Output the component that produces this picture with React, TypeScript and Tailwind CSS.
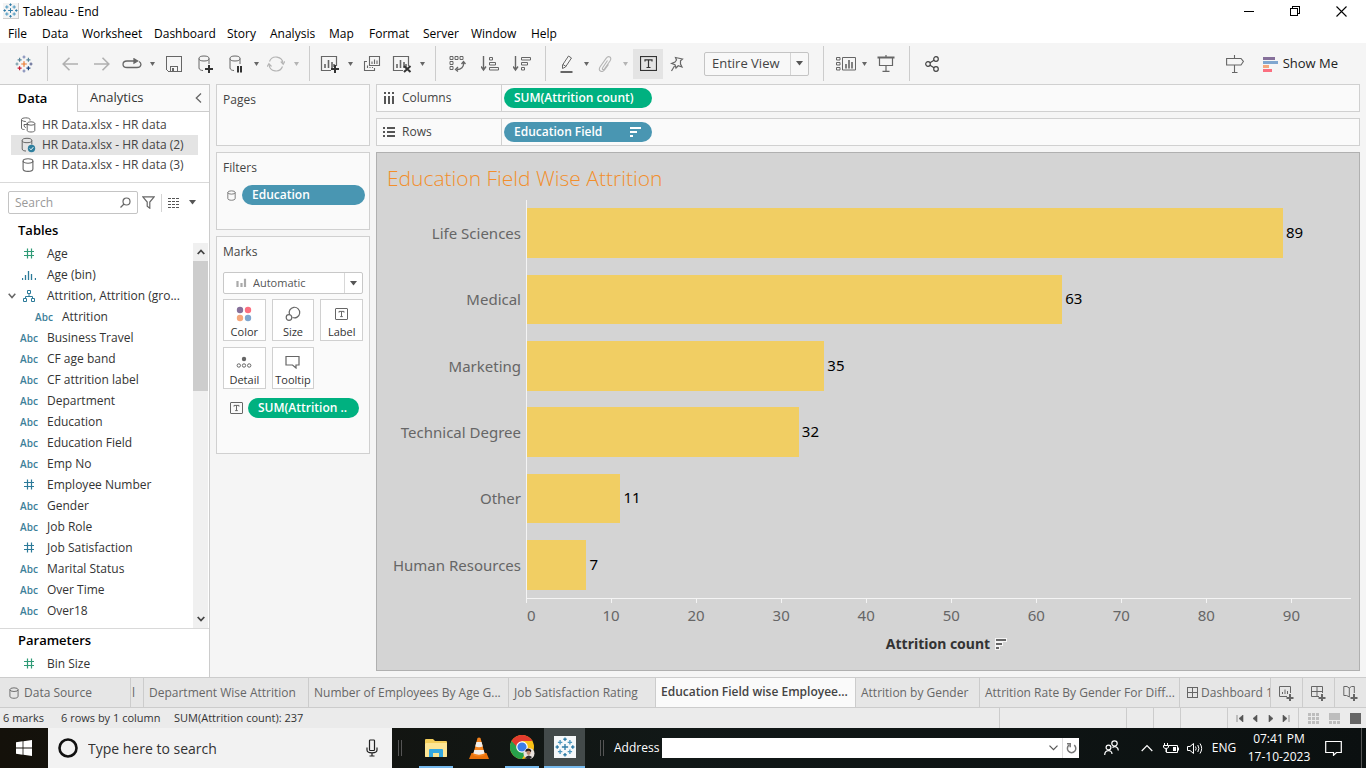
import React from "react";

const UI = "font-['Open_Sans','Noto_Sans',sans-serif]";

/* ---------- small drawings ---------- */

type IconProps = { w: number; h: number; children: React.ReactNode; color?: string; sw?: number; crisp?: boolean; className?: string };

function Icon({ w, h, children, color = "#666", sw = 1, crisp = false, className = "" }: IconProps) {
  return (
    <svg
      width={w}
      height={h}
      viewBox={`0 0 ${w} ${h}`}
      fill="none"
      stroke={color}
      strokeWidth={sw}
      shapeRendering={crisp ? "crispEdges" : "auto"}
      className={`shrink-0 ${className}`}
      aria-hidden="true"
    >
      {children}
    </svg>
  );
}

function TableauLogo({ size, mono = false }: { size: number; mono?: boolean }) {
  const c = mono
    ? ["#2e7ba6", "#4b97bf", "#4b97bf", "#4b97bf", "#4b97bf", "#2e7ba6", "#2e7ba6", "#2e7ba6", "#2e7ba6"]
    : ["#eb7a2f", "#5b879b", "#5b879b", "#c72035", "#1f457e", "#7b86b5", "#7199a6", "#5b6591", "#7b86b5"];
  const p = (x: number, y: number, r: number) => `M${x - r} ${y}H${x + r}M${x} ${y - r}V${y + r}`;
  return (
    <svg width={size} height={size} viewBox="0 0 18 18" fill="none" strokeWidth="1.2" className="shrink-0" aria-hidden="true">
      <path d={p(9, 9, 2.8)} stroke={c[0]} />
      <path d={p(4.6, 4.8, 2)} stroke={c[1]} />
      <path d={p(13.4, 4.8, 2)} stroke={c[2]} />
      <path d={p(4.6, 13.2, 2)} stroke={c[3]} />
      <path d={p(13.4, 13.2, 2)} stroke={c[4]} />
      <path d={p(9, 2, 1.5)} stroke={c[5]} />
      <path d={p(2, 9, 1.5)} stroke={c[6]} />
      <path d={p(16, 9, 1.5)} stroke={c[7]} />
      <path d={p(9, 16, 1.5)} stroke={c[8]} />
    </svg>
  );
}

const Caret = ({ color = "#666" }: { color?: string }) => (
  <svg width="5" height="4" viewBox="0 0 5 4" fill={color} className="shrink-0" aria-hidden="true">
    <path d="M0 0H5L2.5 4Z" />
  </svg>
);

const BigCaret = ({ className = "" }: { className?: string }) => (
  <svg width="7" height="5" viewBox="0 0 7 5" fill="#555" className={`shrink-0 ${className}`} aria-hidden="true">
    <path d="M0 0H7L3.5 4.5Z" />
  </svg>
);

const Cylinder = ({ w = 12, h = 14, color = "#666" }: { w?: number; h?: number; color?: string }) => (
  <svg width={w} height={h} viewBox="0 0 12 14" fill="none" stroke={color} strokeWidth="1.1" className="shrink-0" aria-hidden="true">
    <ellipse cx="6" cy="3" rx="4.9" ry="2.2" />
    <path d="M1.1 3V11C1.1 14.1 10.9 14.1 10.9 11V3" />
  </svg>
);

const TextMark = ({ w = 13, h = 12, color = "#666" }: { w?: number; h?: number; color?: string }) => (
  <svg width={w} height={h} viewBox="0 0 13 12" fill="none" stroke={color} className="shrink-0" aria-hidden="true">
    <rect x="0.5" y="0.5" width="12" height="11" rx="0.5" />
    <path d="M4 4.6V3.4H9V4.6M6.5 3.4V8.6M5.2 8.6H7.8" />
  </svg>
);

const Barred = () => (
  <>
    <path d="M11 15.5H1.5V1.5H16.5V11" />
    <path d="M5 13V9M8.5 13V5M12 13V7M14 12V9" strokeWidth="1.6" />
  </>
);

const PlusMark = ({ x, y }: { x: number; y: number }) => <path d={`M${x - 4} ${y}H${x + 4}M${x} ${y - 4}V${y + 4}`} stroke="#333" strokeWidth="2" />;

/* ---------- title and menu bars ---------- */

function TitleBar() {
  return (
    <header className="flex h-[22px] shrink-0 items-center bg-white pr-0.5 pl-[3px]">
      <span className="flex border-r border-b border-[#ccc] bg-[#f4f4f4]">
        <TableauLogo size={15} mono />
      </span>
      <h1 className="ml-1 flex-1 pt-0.5 text-[12px] leading-4 text-black">Tableau - End</h1>
      <button aria-label="Minimize" className="flex h-full w-[46px] items-center justify-center">
        <Icon w={10} h={10} color="#000" crisp><path d="M0 5.5H10" /></Icon>
      </button>
      <button aria-label="Restore" className="flex h-full w-[46px] items-center justify-center">
        <Icon w={10} h={10} color="#000" crisp><path d="M.5 2.5H7.5V9.5H.5ZM2.5 2.5V.5H9.5V7.5H7.5" /></Icon>
      </button>
      <button aria-label="Close" className="flex h-full w-[46px] items-center justify-center">
        <Icon w={11} h={11} color="#000" sw={1.1}><path d="M.5.5L10.5 10.5M10.5.5L.5 10.5" /></Icon>
      </button>
    </header>
  );
}

const MENUS = [
  ["File", "w-[34px]"], ["Data", "w-10"], ["Worksheet", "w-[72px]"], ["Dashboard", "w-[73px]"], ["Story", "w-[43px]"],
  ["Analysis", "w-[59px]"], ["Map", "w-10"], ["Format", "w-[54px]"], ["Server", "w-12"], ["Window", "w-[60px]"], ["Help", "w-10"],
];

function MenuBar() {
  return (
    <nav className="flex h-[21px] shrink-0 bg-white pt-0.5 pl-2 text-[12px] text-black">
      {MENUS.map(([name, w]) => (
        <button key={name} className={`${w} text-left whitespace-nowrap`}>{name}</button>
      ))}
    </nav>
  );
}

/* ---------- toolbar ---------- */

function Tool({ label, className, children }: { label: string; className: string; children: React.ReactNode }) {
  return (
    <button aria-label={label} className={`flex h-full shrink-0 items-center justify-center ${className}`}>{children}</button>
  );
}

const Sep = ({ className = "" }: { className?: string }) => <span className={`h-[35px] w-px shrink-0 bg-[#ccc] ${className}`} />;

function Toolbar() {
  return (
    <div role="toolbar" aria-label="Main toolbar" className="flex h-[41px] shrink-0 items-center bg-[#f5f5f5]">
      <Tool label="Start page" className="w-[47px]"><TableauLogo size={18} /></Tool>
      <Sep />
      <Tool label="Undo" className="ml-1.5 w-8"><Icon w={16} h={14} color="#b0b0b0" sw={1.6}><path d="M16 7H1M7.5.7L1.2 7L7.5 13.3" /></Icon></Tool>
      <Tool label="Redo" className="w-8"><Icon w={16} h={14} color="#b0b0b0" sw={1.6}><path d="M0 7H15M8.5.7L14.8 7L8.5 13.3" /></Icon></Tool>
      <Tool label="Replay" className="w-7">
        <Icon w={20} h={12} sw={1.3}><path d="M14 3H5C-.3 3-.3 9.5 5 9.5H15C19.5 9.5 20 5 17 3.5" /><path d="M12 .8L15.6 3L12 5.2Z" fill="#666" /></Icon>
      </Tool>
      <Tool label="Replay options" className="w-3"><Caret /></Tool>
      <Tool label="Save" className="w-8">
        <Icon w={16} h={16} crisp><path d="M.5.5H15.5V15.5H2.5L.5 13.5ZM4.5 15V10.5H11.5V15" /><path d="M6 12H8V15H6Z" fill="#666" stroke="none" /></Icon>
      </Tool>
      <Tool label="New data source" className="w-[31px]">
        <Icon w={16} h={18}><ellipse cx="6" cy="3.5" rx="5" ry="2.5" /><path d="M1 3.5V13C1 14.5 3 15.5 5 15.5M11 3.5V9" /><PlusMark x={11} y={14} /></Icon>
      </Tool>
      <Tool label="Pause updates" className="w-[29px]">
        <Icon w={14} h={18}><ellipse cx="6" cy="3.5" rx="5" ry="2.5" /><path d="M1 3.5V13C1 14.5 3 15.5 5 15.5M11 3.5V9" /><path d="M9 11V17.5M12 11V17.5" stroke="#333" strokeWidth="2" /></Icon>
      </Tool>
      <Tool label="Pause options" className="w-3"><Caret /></Tool>
      <Tool label="Refresh" className="w-7">
        <Icon w={18} h={16} color="#b4b4b4" sw={1.2}><path d="M2.5 5.5A7 7 0 0 1 16 7.5M15.5 10.5A7 7 0 0 1 2 8.5" /><path d="M13.8 5.5L16.2 8.2L18 5.2M0 10.8L1.9 7.8L4.5 10.5" /></Icon>
      </Tool>
      <Tool label="Refresh options" className="w-[13px]"><Caret color="#b4b4b4" /></Tool>
      <Sep className="ml-1.5" />
      <Tool label="New worksheet" className="ml-1.5 w-7"><Icon w={20} h={18} sw={1.2}><Barred /><PlusMark x={15} y={14} /></Icon></Tool>
      <Tool label="New worksheet options" className="w-3"><Caret /></Tool>
      <Tool label="Duplicate" className="w-[31px]">
        <Icon w={18} h={18} sw={1.1}><path d="M6.5 1.5H16.5V10.5H6.5Z" /><path d="M9 9V6.5M11.5 9V4.5M14 9V5.5" /><path d="M4 6.5H1.5V15.5H11.5V13M4.5 13V10.5M7 13V12M9.5 13V12" /></Icon>
      </Tool>
      <Tool label="Clear sheet" className="w-[30px]">
        <Icon w={20} h={18} sw={1.2}><Barred /><path d="M12 11L18.5 17M18.5 11L12 17" stroke="#333" strokeWidth="2" /></Icon>
      </Tool>
      <Tool label="Clear options" className="w-[11px]"><Caret /></Tool>
      <Sep className="ml-[7px]" />
      <Tool label="Swap rows and columns" className="ml-[5px] w-8">
        <Icon w={17} h={17}><path d="M1 1.5H4V4.5H1ZM6 1.5H9V4.5H6ZM11 1.5H14V4.5H11ZM1 6.5H4V9.5H1ZM1 11.5H4V14.5H1Z" /><path d="M14.5 8C15 12 12 14.5 8 14.5M12.5 9L14.5 6.5L16.5 9M9 12L6.5 14.5L9 16.5" strokeWidth="1.3" /></Icon>
      </Tool>
      <Tool label="Sort ascending" className="ml-px w-8">
        <Icon w={18} h={16}><path d="M2.5 0V13M0 10.5L2.5 14L5 10.5" strokeWidth="1.4" /><path d="M8.5 1.5H11.5V4H8.5ZM8.5 6.5H14.5V9H8.5ZM8.5 11.5H17.5V14H8.5Z" /></Icon>
      </Tool>
      <Tool label="Sort descending" className="w-8">
        <Icon w={18} h={16}><path d="M2.5 0V13M0 10.5L2.5 14L5 10.5" strokeWidth="1.4" /><path d="M8.5 1.5H17.5V4H8.5ZM8.5 6.5H14.5V9H8.5ZM8.5 11.5H11.5V14H8.5Z" /></Icon>
      </Tool>
      <Sep className="ml-[7px]" />
      <Tool label="Highlight" className="ml-[7px] w-7">
        <Icon w={14} h={18}><path d="M2.5 10L8.5 1L11.5 3L5.5 12L2.5 13.5ZM3 9.5L6 11.5" /><path d="M.5 17H12.5" strokeWidth="2" /></Icon>
      </Tool>
      <Tool label="Highlight options" className="w-2.5"><Caret /></Tool>
      <Tool label="Group" className="w-7">
        <Icon w={14} h={16} color="#b4b4b4" sw={1.1}><path d="M9.5 4.5L4.8 11.5C3.5 13.3 5.3 14.4 6.5 12.8L12 5C14.5 1.3 10.5-.8 8.3 2.2L2.3 10.5C-.8 15 4 17 6.5 14L10.5 8.5" /></Icon>
      </Tool>
      <Tool label="Group options" className="w-3"><Caret color="#b4b4b4" /></Tool>
      <button aria-label="Show mark labels" aria-pressed="true" className="ml-0.5 flex size-[30px] shrink-0 items-center justify-center bg-[#e4e4e4]">
        <Icon w={17} h={15} color="#333"><rect x="0.5" y="0.5" width="16" height="14" strokeWidth="1.2" /><path d="M5 5.5V3.8H12V5.5M8.5 3.8V11.5M6.5 11.5H10.5" strokeWidth="1.2" /></Icon>
      </button>
      <Tool label="Fix axes" className="w-7">
        <Icon w={14} h={16} sw={1.2}><path d="M5.5 1.5L12.5 3L10.5 4.8V8L12 11L8.2 9.8L6 12L5 8.8L1.5 7.5L5 6L6.5 4ZM4.5 10L1.5 15" /></Icon>
      </Tool>
      <div className="relative ml-[13px] flex h-6 w-[105px] shrink-0 items-center rounded-xs border border-[#c4c4c4] bg-[#f8f8f8]">
        <select aria-label="Fit" className="h-full w-full appearance-none pl-[7px] text-[13px] text-[#444] outline-none">
          <option>Entire View</option>
        </select>
        <span className="pointer-events-none absolute inset-y-0 right-0 flex w-[18px] items-center justify-center border-l border-[#d4d4d4]"><BigCaret /></span>
      </div>
      <Sep className="ml-3.5" />
      <Tool label="Show cards" className="ml-2 w-7">
        <Icon w={20} h={16}><path d="M.5 1.5H4V4H.5ZM.5 6.5H4V9H.5ZM.5 11.5H4V14H.5ZM6.5 1.5H19.5V14H6.5Z" /><path d="M10 12.5V8M13 12.5V4M16 12.5V6" strokeWidth="1.6" /></Icon>
      </Tool>
      <Tool label="Card options" className="w-2"><Caret /></Tool>
      <Tool label="Presentation mode" className="w-9">
        <Icon w={18} h={18} sw={1.2}><path d="M.5 2.5H17.5" strokeWidth="2" /><path d="M2.5 3V10.5H15.5V3M9 0V2M9 11V16M5.5 16.3H12.5" /></Icon>
      </Tool>
      <Sep className="ml-[5px]" />
      <Tool label="Share" className="ml-2 w-7">
        <Icon w={14} h={16} color="#444" sw={1.2}><circle cx="3" cy="8" r="2.3" /><circle cx="11" cy="3" r="2.3" /><circle cx="11" cy="13" r="2.3" /><path d="M5 6.8L9 4.2M5 9.2L9 11.8" /></Icon>
      </Tool>
      <Tool label="Data guide" className="ml-auto w-10">
        <Icon w={18} h={18} sw={1.1}><path d="M.6 3.5H15L17.4 6.5L15 10H.6ZM8.5 0V3M8.5 10V17.5M6 17.5H11.5" /></Icon>
      </Tool>
      <button className="mr-7 ml-2 flex h-full items-center gap-[5px] text-[13px] text-[#222]">
        <svg width="15" height="16" aria-hidden="true">
          <path d="M0 1H12V4H0Z" fill="#86709a" /><path d="M0 5H15V8H0Z" fill="#7fa6cf" /><path d="M0 9H6V12H0Z" fill="#f5a77c" /><path d="M0 13H9V16H0Z" fill="#fb6f80" />
        </svg>
        <span className="whitespace-nowrap">Show Me</span>
      </button>
    </div>
  );
}

/* ---------- data pane ---------- */

type Field = { name: string; kind: "#" | "Abc" | "bin" | "group"; nested?: boolean; green?: boolean };

const FIELDS: Field[] = [
  { name: "Age", kind: "#", green: true },
  { name: "Age (bin)", kind: "bin" },
  { name: "Attrition, Attrition (gro...", kind: "group" },
  { name: "Attrition", kind: "Abc", nested: true },
  { name: "Business Travel", kind: "Abc" },
  { name: "CF age band", kind: "Abc" },
  { name: "CF attrition label", kind: "Abc" },
  { name: "Department", kind: "Abc" },
  { name: "Education", kind: "Abc" },
  { name: "Education Field", kind: "Abc" },
  { name: "Emp No", kind: "Abc" },
  { name: "Employee Number", kind: "#" },
  { name: "Gender", kind: "Abc" },
  { name: "Job Role", kind: "Abc" },
  { name: "Job Satisfaction", kind: "#" },
  { name: "Marital Status", kind: "Abc" },
  { name: "Over Time", kind: "Abc" },
  { name: "Over18", kind: "Abc" },
];

function FieldIcon({ kind, green }: { kind: Field["kind"]; green?: boolean }) {
  const color = green ? "#2f9a76" : "#2c7a99";
  if (kind === "Abc") return <span className="text-[10px] leading-none font-semibold text-[#3d8099]">Abc</span>;
  if (kind === "#") return <Icon w={12} h={11} color={color} sw={1.2}><path d="M4.500 .5V10.5M8.500 .5V10.5M1 3.5H11M1 7.5H11" /></Icon>;
  if (kind === "bin")
    return <Icon w={14} h={10} color={color}><path d="M.5 8V10M3.5 5V10M6.5 1V10M9.5 4V10M13.5 8V10" strokeWidth="1.3" /></Icon>;
  return (
    <Icon w={12} h={12} color={color}>
      <path d="M4.5.5H7.5V3.5H4.5ZM.5 8.5H3.5V11.5H.5ZM8.5 8.5H11.5V11.5H8.5ZM6 4V6M2.5 8V6.5H9.5V8" />
    </Icon>
  );
}

function FieldRow({ f }: { f: Field }) {
  return (
    <li className="flex h-[21px] items-center">
      {f.kind === "group" ? (
        <button aria-label="Collapse group" className="flex w-5 justify-end pr-1">
          <Icon w={8} h={6} sw={1.5}><path d="M.7.8L4 4.5L7.3.8" /></Icon>
        </button>
      ) : (
        <span className={f.nested ? "w-[35px]" : "w-5"} />
      )}
      <span className="flex w-[18px] justify-center"><FieldIcon kind={f.kind} green={f.green} /></span>
      <span className="ml-[9px] whitespace-nowrap text-[12px] leading-5 text-[#333]">{f.name}</span>
    </li>
  );
}

function DataPane() {
  return (
    <aside className="flex w-[210px] shrink-0 flex-col border-t border-r border-[#ccc] bg-white">
      <div role="tablist" className="flex h-[27px] shrink-0">
        <button role="tab" aria-selected="true" className="w-[77px] pr-3 text-[13px] font-semibold text-black">Data</button>
        <div className="flex flex-1 items-center justify-between border-b border-l border-[#ccc] bg-[#fafafa] pr-[7px] pl-3">
          <button role="tab" aria-selected="false" className="text-[13px] text-[#333]">Analytics</button>
          <button aria-label="Collapse pane"><Icon w={7} h={10} sw={1.3}><path d="M6 .5L1.3 5L6 9.5" /></Icon></button>
        </div>
      </div>
      <ul className="shrink-0 border-b border-[#d9d9d9] px-[11px] pt-[3px] pb-[7px] text-[12px] leading-5 text-[#444]">
        <li className="flex h-5 items-center gap-1.5 pl-[9px]">
          <Icon w={16} h={16}>
            <path d="M10 3.5V2.5C10 .3 1.5.3 1.5 2.5C1.5 4.5 6 4.5 6 4.5M1.5 2.5V11C1.5 12.3 3 12.5 4.5 12.5M4 7.5H8.5L6.8 5.8M4 7.5C4 10 5 10.5 6 10.5" />
            <ellipse cx="11" cy="6.5" rx="3.8" ry="1.7" /><path d="M7.2 6.5V13.5C7.2 15.5 14.8 15.5 14.8 13.5V6.5" />
          </Icon>
          <span>HR Data.xlsx - HR data</span>
        </li>
        <li className="flex h-5 items-center gap-1.5 bg-[#e4e4e4] pl-[9px]">
          <Icon w={16} h={16}>
            <ellipse cx="7" cy="3.5" rx="4.8" ry="2.2" /><path d="M2.2 3.5V12C2.2 13.8 5 14 6 14M11.8 3.5V7.5" />
            <circle cx="11.5" cy="11.5" r="3.7" fill="#2f7f9e" stroke="none" /><path d="M9.8 11.5L11 12.8L13.3 10.2" stroke="#fff" />
          </Icon>
          <span>HR Data.xlsx - HR data (2)</span>
        </li>
        <li className="flex h-5 items-center gap-1.5 pl-[9px]">
          <span className="flex w-4 justify-center"><Cylinder /></span>
          <span>HR Data.xlsx - HR data (3)</span>
        </li>
      </ul>
      <div className="mt-2 flex h-[23px] shrink-0 items-center px-2">
        <div className="flex h-[23px] w-[130px] items-center rounded-xs border border-[#c4c4c4] px-1.5">
          <input aria-label="Search fields" placeholder="Search" className="w-0 flex-1 text-[12px] text-[#333] outline-none placeholder:text-[#999]" />
          <Icon w={11} h={11} sw={1.2}><circle cx="6.5" cy="4.5" r="3.5" /><path d="M4 7L.5 10.5" /></Icon>
        </div>
        <button aria-label="Filter fields" className="flex w-[21px] justify-center"><Icon w={13} h={13} sw={1.2}><path d="M.8.8H12.2L7.8 6V12.2L5.2 10.2V6Z" /></Icon></button>
        <span className="ml-0.5 h-[18px] w-px bg-[#d4d4d4]" />
        <button aria-label="View as list" className="ml-1.5 flex items-center gap-[9px]">
          <svg width="12" height="10" viewBox="0 0 12 10" fill="none" stroke="#555" className="shrink-0" aria-hidden="true">
            <path d="M0 .5H12M0 3.5H12M0 6.5H12M0 9.5H12" strokeDasharray="3 1" />
          </svg>
          <BigCaret />
        </button>
      </div>
      <h2 className="mt-1 h-[25px] shrink-0 pl-[18px] text-[13px] leading-6 font-semibold text-black">Tables</h2>
      <div className="flex min-h-0 flex-1 border-b border-[#d9d9d9]">
        <ul className="flex-1">{FIELDS.map((f) => <FieldRow key={f.name} f={f} />)}</ul>
        <div className="mr-px flex w-[15px] flex-col bg-[#f0f0f0]">
          <button aria-label="Scroll up" className="flex h-[18px] items-center justify-center"><Icon w={8} h={6} color="#444" sw={1.8}><path d="M.7 5L4 1.5L7.3 5" /></Icon></button>
          <div className="h-[130px] bg-[#cdcdcd]" />
          <button aria-label="Scroll down" className="mt-auto flex h-[19px] items-center justify-center"><Icon w={8} h={6} color="#444" sw={1.8}><path d="M.7 1L4 4.5L7.3 1" /></Icon></button>
        </div>
      </div>
      <h2 className="h-6 shrink-0 pl-[18px] text-[13px] leading-[22px] font-semibold text-black">Parameters</h2>
      <ul className="mb-[3px] shrink-0"><FieldRow f={{ name: "Bin Size", kind: "#", green: true }} /></ul>
    </aside>
  );
}

/* ---------- shelves and marks ---------- */

const CARD = "border border-[#d0d0d0] bg-[#fafafa] px-1.5 text-[12px] text-[#444]";
const PILL = "flex h-5 items-center rounded-full px-2.5 text-[12px] font-semibold text-white whitespace-nowrap";

const MARK_CARDS = [
  {
    name: "Color",
    icon: <Icon w={16} h={16}><g stroke="none"><circle cx="4" cy="4" r="3.2" fill="#86709a" /><circle cx="12" cy="4" r="3.2" fill="#fb6f80" /><circle cx="4" cy="12" r="3.2" fill="#f5a77c" /><circle cx="12" cy="12" r="3.2" fill="#7fa6cf" /></g></Icon>,
  },
  { name: "Size", icon: <Icon w={16} h={16} sw={1.2}><path d="M4.5 8.5A5.3 5.3 0 1 1 7.5 11.5" /><circle cx="4" cy="11.5" r="2.8" /></Icon> },
  { name: "Label", icon: <TextMark /> },
  { name: "Detail", icon: <Icon w={16} h={14}><circle cx="8" cy="4" r="2.2" fill="#666" stroke="none" /><circle cx="2.8" cy="10.5" r="1.7" /><circle cx="8" cy="10.5" r="1.7" /><circle cx="13.2" cy="10.5" r="1.7" /></Icon> },
  { name: "Tooltip", icon: <Icon w={15} h={14} sw={1.2}><path d="M1 1.5H14V10H11V13L7.5 10H1Z" /></Icon> },
];

function Cards() {
  return (
    <div className="ml-1.5 flex w-[154px] shrink-0 flex-col gap-1.5">
      <section className={`${CARD} h-[62px]`}><h2 className="pt-1.5 leading-[18px]">Pages</h2></section>
      <section className={`${CARD} h-[78px] pr-1`}>
        <h2 className="pt-1.5 leading-[18px]">Filters</h2>
        <div className="mt-2 flex items-center gap-1.5 pl-1">
          <Cylinder w={9} h={11} />
          <span className={`${PILL} flex-1 bg-[#4996b2]`}>Education</span>
        </div>
      </section>
      <section className={`${CARD} h-[218px]`}>
        <h2 className="pt-1.5 leading-[18px]">Marks</h2>
        <div className="relative mt-[11px] flex h-[22px] items-center rounded-xs border border-[#c8c8c8] bg-white">
          <select aria-label="Mark type" className="h-full w-full appearance-none pl-[29px] text-[11px] text-[#555] outline-none">
            <option>Automatic</option>
          </select>
          <span className="pointer-events-none absolute left-3 flex"><Icon w={11} h={10} color="#aaa"><path d="M1.5 3V9M5.5 5V9M9 .8V9" strokeWidth="2.2" /></Icon></span>
          <span className="pointer-events-none absolute inset-y-0 right-0 flex w-[18px] items-center justify-center border-l border-[#d8d8d8]"><BigCaret /></span>
        </div>
        <div className="mt-[5px] grid grid-cols-3 gap-1.5">
          {MARK_CARDS.map((m) => (
            <button key={m.name} className="flex h-[42px] flex-col items-center border border-[#d0d0d0] bg-white text-[11px] text-[#333]">
              <span className="flex h-6 items-center pt-1">{m.icon}</span>
              <span className="leading-4">{m.name}</span>
            </button>
          ))}
        </div>
        <div className="mt-[9px] flex items-center gap-[5px] pr-1 pl-[7px]">
          <TextMark />
          <span className={`${PILL} flex-1 bg-[#00b180]`}>SUM(Attrition ..</span>
        </div>
      </section>
    </div>
  );
}

function Shelf({ name, icon, children }: { name: string; icon: React.ReactNode; children: React.ReactNode }) {
  return (
    <section className="flex h-7 shrink-0 items-center border border-[#d0d0d0] bg-[#fafafa] text-[12px] text-[#444]">
      <h2 className="flex h-full w-[125px] items-center gap-1.5 border-r border-[#d0d0d0] pl-1.5">{icon}{name}</h2>
      {children}
    </section>
  );
}

/* ---------- chart ---------- */

const AXIS_MAX = 97;
const DATA = [
  { field: "Life Sciences", count: 89 },
  { field: "Medical", count: 63 },
  { field: "Marketing", count: 35 },
  { field: "Technical Degree", count: 32 },
  { field: "Other", count: 11 },
  { field: "Human Resources", count: 7 },
];
const TICKS = [10, 20, 30, 40, 50, 60, 70, 80, 90];
const pct = (n: number) => `${(n / AXIS_MAX) * 100}%`;

function Chart() {
  return (
    <section className="flex min-h-0 flex-1 flex-col border border-[#b0b0b0] bg-[#d4d4d4] pr-2 font-['Noto_Sans','Open_Sans',sans-serif]">
      <h2 className="h-[47px] shrink-0 pt-2.5 pl-2.5 font-['Open_Sans','Noto_Sans',sans-serif] text-[21px] leading-[30px] font-light text-[#f28e2b]">Education Field Wise Attrition</h2>
      <div className="flex flex-1 flex-col text-[15px] text-[#666]">
        {DATA.map((d) => (
          <div key={d.field} className="flex flex-1 items-center">
            <span className="w-[149px] shrink-0 pr-[5px] text-right">{d.field}</span>
            <div className="flex flex-1 items-center self-stretch border-l border-[#f4f4f4]">
              <div className="h-3/4 bg-[#f1ce63]" style={{ width: pct(d.count) }} />
              <span className="pb-0.5 pl-[3px] text-black">{d.count}</span>
            </div>
          </div>
        ))}
      </div>
      <div className="ml-[149px] shrink-0 border-t border-[#f4f4f4] text-[15px] text-[#666]">
        <div className="flex h-1">
          {[0, ...TICKS].map((t) => (
            <span key={t} className="shrink-0 border-l border-[#f4f4f4]" style={{ width: pct(t === 90 ? 7 : 10) }} />
          ))}
        </div>
        <div className="flex leading-6">
          <span className="pl-px" style={{ width: pct(5) }}>0</span>
          {TICKS.map((t) => (
            <span key={t} className="text-center" style={{ width: pct(10) }}>{t}</span>
          ))}
        </div>
        <div className="flex h-[43px] items-start justify-center gap-[5px] pt-[5px] pl-4 text-[14px] leading-6 font-bold text-[#333]">
          <span>Attrition count</span>
          <Icon w={12} h={24} crisp><path d="M0 6H12V10H8V14H5V18H0Z" fill="#f4f4f4" stroke="none" /><path d="M1 8H11M1 12H7M1 16H4" strokeWidth="2" /></Icon>
        </div>
      </div>
    </section>
  );
}

/* ---------- sheet tabs and status bar ---------- */

const TABS: [string, string][] = [
  ["Department Wise Attrition", "w-[165px]"],
  ["Number of Employees By Age G...", "w-[200px]"],
  ["Job Satisfaction Rating", "w-[147px]"],
  ["Education Field wise Employee...", "w-[200px]"],
  ["Attrition by Gender", "w-[124px]"],
  ["Attrition Rate By Gender For Diff...", "w-[200px]"],
];

function SheetTabs() {
  return (
    <nav className="flex h-[31px] shrink-0 border-y border-[#ccc] bg-[#e6e6e6] text-[12px] text-[#666]">
      <button className="flex w-[131px] shrink-0 items-center gap-[5px] border-r border-[#ccc] pl-[9px]"><Cylinder w={10} h={12} />Data Source</button>
      <button aria-label="Previous sheet" className="flex w-[13px] shrink-0 items-center border-r border-[#ccc] pl-px">l</button>
      {TABS.map(([name, w]) => {
        const active = name.startsWith("Education");
        return (
          <button key={name} aria-current={active ? "page" : undefined} className={`${w} shrink-0 border-r border-[#ccc] pl-[5px] text-left whitespace-nowrap ${active ? "bg-[#fafafa] pb-0.5 font-semibold text-[#444]" : ""}`}>{name}</button>
        );
      })}
      <button className="flex w-0 flex-1 items-center gap-[3px] overflow-hidden pl-[7px] whitespace-nowrap">
        <Icon w={11} h={11} crisp><path d="M.5.5H10.5V10.5H.5ZM5.5 0V11M0 5.5H11" /></Icon>Dashboard 1
      </button>
      <button aria-label="New worksheet" className="flex w-8 shrink-0 items-center justify-center border-l border-[#ccc]">
        <Icon w={15} h={16}><path d="M8 11.5H.5V1.5H11.5V8M3.5 9V7M6 9V4.5M8.5 9V6" /><path d="M7.5 13H14.5M11 9V16" strokeWidth="2" /></Icon>
      </button>
      <button aria-label="New dashboard" className="flex w-8 shrink-0 items-center justify-center border-l border-[#ccc]">
        <Icon w={15} h={16}><path d="M8 11.5H.5V1.5H11.5V8M6 1V12M0 6.5H12" /><path d="M7.5 13H14.5M11 9V16" strokeWidth="2" /></Icon>
      </button>
      <button aria-label="New story" className="flex w-8 shrink-0 items-center justify-center border-l border-[#ccc]">
        <Icon w={15} h={16}><path d="M6.5 12L3.5 10.5H.8V1.5H4L6.3 3V12M6.3 3L8.5 1.5H11.3V8" /><path d="M7.5 13H14.5M11 9V16" strokeWidth="2" /></Icon>
      </button>
    </nav>
  );
}

function StatusBar() {
  const nav = [
    ["First sheet", "M1 0V7M7 0L3 3.5L7 7Z"],
    ["Previous sheet", "M6 0L2 3.5L6 7Z"],
    ["Next sheet", "M2 0L6 3.5L2 7Z"],
    ["Last sheet", "M7 0V7M1 0L5 3.5L1 7Z"],
  ];
  return (
    <footer className="flex h-5 shrink-0 items-center bg-[#ebebeb] pl-[3px] text-[11px] whitespace-nowrap text-[#333]">
      <span className="w-[58px]">6 marks</span>
      <span className="w-[113px]">6 rows by 1 column</span>
      <span className="flex-1">SUM(Attrition count): 237</span>
      <span className="h-full w-[127px] border-l border-[#ccc]" />
      <span className="h-full w-[27px] border-l border-[#ccc]" />
      <span className="h-full w-[27px] border-l border-[#ccc]" />
      <span className="h-full w-[47px] border-l border-[#ccc]" />
      <div className="flex h-full w-[71px] items-center justify-around border-l border-[#ccc] px-1">
        {nav.map(([label, d]) => (
          <button key={label} aria-label={label}><Icon w={8} h={7} color="#555"><path d={d} fill="#555" strokeWidth="0.6" /></Icon></button>
        ))}
      </div>
      <div className="flex h-full w-[68px] items-center justify-around border-l border-[#ccc] pl-1">
        <button aria-label="Show sheet sorter"><Icon w={11} h={11} color="#bdbdbd" sw={3} crisp><path d="M0 1.5H11M0 5.5H11M0 9.5H11" strokeDasharray="3 1" /></Icon></button>
        <button aria-label="Show filmstrip"><Icon w={11} h={11} color="#bdbdbd" sw={3} crisp><path d="M0 3.5H11" strokeWidth="7" /><path d="M0 9.5H11" strokeDasharray="3 1" /></Icon></button>
        <button aria-label="Show tabs"><Icon w={11} h={11}><path d="M0 0H11V11H0Z" fill="#666" stroke="none" /></Icon></button>
      </div>
    </footer>
  );
}

/* ---------- taskbar ---------- */

function Taskbar() {
  return (
    <div className="flex h-10 shrink-0 items-center bg-linear-to-r from-[#14110a] via-[#111817] to-[#0b1010] text-[12px] text-white">
      <button aria-label="Start" className="flex h-full w-12 shrink-0 items-center justify-center">
        <svg width="16" height="16" viewBox="0 0 16 16" fill="#fff" aria-hidden="true"><path d="M0 2.2L6.6 1.3V7.6H0ZM7.4 1.2L16 0V7.6H7.4ZM0 8.4H6.6V14.7L0 13.8ZM7.4 8.4H16V16L7.4 14.8Z" /></svg>
      </button>
      <div className="flex h-full w-[344px] shrink-0 items-center bg-[#f2f2f2] pr-3.5 pl-2.5">
        <Icon w={20} h={20} color="#111" sw={2.6}><circle cx="10" cy="10" r="8.5" /></Icon>
        <input aria-label="Search the computer" placeholder="Type here to search" className="ml-2.5 w-0 flex-1 text-[14px] text-[#222] outline-none placeholder:text-[#333]" />
        <Icon w={12} h={18} color="#222" sw={1.2}><rect x="3.5" y="1" width="5" height="10.5" rx="0.8" /><path d="M1 8.5V11C1 14.8 11 14.8 11 11V8.5M6 14V17M3.5 17H8.5" /></Icon>
      </div>
      <span className="ml-1.5 h-4 w-1 border-x border-[#555]" />
      <button aria-label="File Explorer" className="ml-[17px] flex h-full w-[34px] items-center justify-center border-b-2 border-[#76b9ed] pt-0.5">
        <svg width="22" height="20" viewBox="0 0 22 20" aria-hidden="true">
          <path d="M0 2Q0 1 1 1H8L10 3H21Q22 3 22 4V18Q22 19 21 19H1Q0 19 0 18Z" fill="#f3cd5a" /><path d="M1 5H22V18Q22 19 21 19H1Q0 19 0 18V6Z" fill="#fde594" /><path d="M4 19V12Q4 11 5 11H17Q18 11 18 12V19H14V15H8V19Z" fill="#35a8e0" />
        </svg>
      </button>
      <button aria-label="VLC media player" className="flex h-full w-[52px] items-center justify-center">
        <svg width="20" height="23" viewBox="0 0 20 23" aria-hidden="true">
          <path d="M2.5 16H17.5L20 22H0Z" fill="#e8720c" /><path d="M8.5 1Q10 0 11.5 1L16 18Q10 21 4 18Z" fill="#f5841f" /><path d="M7.4 5L12.6 5L13.8 9.5Q10 11 6.2 9.5ZM5.3 13H14.7L15.6 16.5Q10 18.8 4.4 16.5Z" fill="#f1efec" />
        </svg>
      </button>
      <button aria-label="Google Chrome" className="flex h-full w-[34px] items-center justify-center border-b-2 border-[#76b9ed]">
        <svg width="25" height="25" viewBox="0 0 25 25" aria-hidden="true">
          <circle cx="12" cy="12" r="12" fill="#fbc116" /><path d="M12 12L1.6 6A12 12 0 0 0 12 24L17.2 15Z" fill="#28a14b" /><path d="M1.6 6A12 12 0 0 1 22.4 6H12L7 12Z" fill="#e33b2e" />
          <circle cx="12" cy="12" r="5.8" fill="#fff" /><circle cx="12" cy="12" r="4.6" fill="#3b7de9" /><circle cx="19" cy="18.5" r="5.5" fill="#e9e2dd" /><path d="M15 16.5Q16 12.5 20 14Q22 15 21 17Z" fill="#221a18" /><circle cx="18.6" cy="17.8" r="2.1" fill="#b98a70" /><path d="M15 23Q18 18.5 22 22L20 24H17Z" fill="#2a2a2e" />
        </svg>
      </button>
      <button aria-label="Tableau" className="ml-[5px] flex h-full w-[41px] items-center justify-center border-b-2 border-[#76b9ed] bg-[#434a4a]">
        <span className="flex size-[22px] items-center justify-center bg-[#f6f8fa]"><TableauLogo size={20} mono /></span>
      </button>
      <span className="ml-[15px] h-4 w-1 border-x border-[#555]" />
      <label htmlFor="address" className="ml-2.5 w-12 shrink-0">Address</label>
      <div className="flex h-5 w-0 flex-1 items-center bg-white">
        <input id="address" className="h-full w-0 flex-1 px-1 text-black outline-none" />
        <button aria-label="Address history" className="flex w-[17px] justify-center"><Icon w={9} h={6} color="#555" sw={1.2}><path d="M.5.7L4.5 4.7L8.5.7" /></Icon></button>
        <button aria-label="Go" className="flex h-full w-[17px] items-center justify-center border-l border-[#ddd]"><Icon w={11} h={12} color="#777" sw={1.5}><path d="M8.2 3.2A4.2 4.2 0 1 1 3 3.2M1 1.8H4.2V5.2" /></Icon></button>
      </div>
      <button aria-label="People" className="ml-[15px] flex h-full w-[34px] items-center justify-center">
        <Icon w={15} h={16} color="#fff" sw={1.2}><circle cx="10.5" cy="3.5" r="2.7" /><circle cx="4.5" cy="7.5" r="2.4" /><path d="M.7 15C.7 9.3 8 9.3 8 14M8.5 7.5C11 5.5 14.3 7 14.3 10.5" /></Icon>
      </button>
      <button aria-label="Hidden icons" className="ml-[7px] flex h-full w-6 items-center justify-center"><Icon w={12} h={8} color="#fff" sw={1.2}><path d="M.7 7L6 1.5L11.3 7" /></Icon></button>
      <button aria-label="Battery" className="flex h-full w-6 items-center justify-center">
        <Icon w={16} h={13} color="#fff"><path d="M5.5 3.5H14.5V10.5H3.5V7M15.5 5.5V8.5" /><path d="M10 5H13V9H10Z" fill="#fff" stroke="none" /><path d="M1.5 1V3M4.5 1V3M.5 3.5H5.5V5C5.5 7 .5 7 .5 5ZM3 6.5V10" /></Icon>
      </button>
      <button aria-label="Volume" className="flex h-full w-6 items-center justify-center">
        <Icon w={17} h={13} color="#fff"><path d="M.5 4.5H3L6.5 1.5V11.5L3 8.5H.5ZM8.5 4.5Q9.8 6.5 8.5 8.5M10.8 3Q13 6.5 10.8 10M13 1.5Q16.3 6.5 13 11.5" /></Icon>
      </button>
      <span className="w-[34px] text-center">ENG</span>
      <time className="ml-1 flex w-[68px] flex-col text-center leading-[18px] whitespace-nowrap" dateTime="2023-10-17T19:41"><span>07:41 PM</span><span>17-10-2023</span></time>
      <button aria-label="Notifications" className="ml-[3px] flex h-full w-[34px] items-center justify-center">
        <Icon w={17} h={16} color="#fff" sw={1.2}><path d="M.7 1.5H16.3V12.5H11.5L8.5 15.3V12.5H.7Z" /></Icon>
      </button>
      <span className="mr-1 ml-[11px] h-full w-px bg-[#555]" />
    </div>
  );
}

export default function App() {
  return (
    <div className={`flex min-h-screen flex-col bg-[#f5f5f5] ${UI}`}>
      <TitleBar />
      <MenuBar />
      <Toolbar />
      <main className="flex flex-1">
        <DataPane />
        <Cards />
        <div className="mx-1.5 flex min-w-0 flex-1 flex-col gap-1.5 pb-1.5">
          <Shelf name="Columns" icon={<Icon w={13} h={12} color="#555" sw={2} crisp><path d="M2 0V2M2 4V12M6 0V2M6 4V12M10 0V2M10 4V12" /></Icon>}>
            <span className={`${PILL} ml-0.5 w-[148px] bg-[#00b180]`}>SUM(Attrition count)</span>
          </Shelf>
          <Shelf name="Rows" icon={<Icon w={13} h={10} color="#555" sw={2} crisp><path d="M0 1H2M4 1H12M0 5H2M4 5H12M0 9H2M4 9H12" /></Icon>}>
            <span className={`${PILL} ml-0.5 w-[148px] justify-between bg-[#4996b2]`}>
              Education Field
              <Icon w={12} h={10} color="#fff" sw={2} crisp><path d="M0 1H11M0 5H7M0 9H3" /></Icon>
            </span>
          </Shelf>
          <Chart />
        </div>
      </main>
      <SheetTabs />
      <StatusBar />
      <Taskbar />
    </div>
  );
}
